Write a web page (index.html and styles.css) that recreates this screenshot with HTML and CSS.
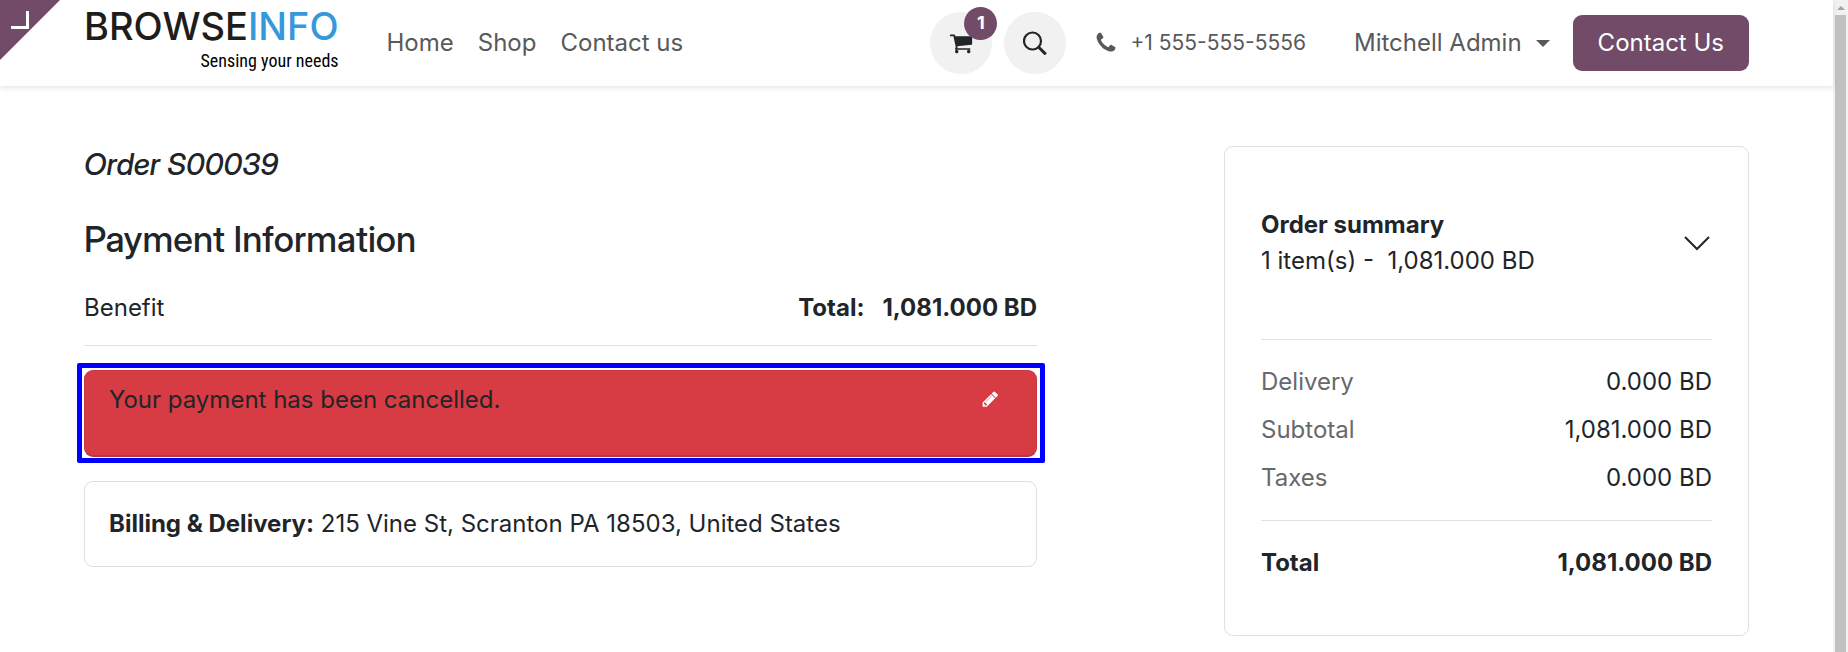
FILE: index.html
```html
<!DOCTYPE html>
<html lang="en">
<head>
    <meta charset="UTF-8">
    <meta name="viewport" content="width=device-width, initial-scale=1.0">
    <title>Order S00039 | Payment Information</title>
    <link rel="stylesheet" href="styles.css">
</head>
<body>
    <div class="page">
        <a href="#" class="corner-toggle" aria-label="Back to editor"></a>

        <header class="site-header">
            <a href="#" class="logo">
                <span class="logo-name">BROWSE<span class="logo-accent">INFO</span></span>
                <span class="logo-tagline">Sensing your needs</span>
            </a>
            <nav class="main-nav">
                <a href="#">Home</a>
                <a href="#">Shop</a>
                <a href="#">Contact us</a>
            </nav>
            <div class="header-tools">
                <a href="#" class="round-button" aria-label="Cart">
                    <svg width="24" height="24" viewBox="0 0 1792 1792" fill="currentColor"><path d="M704 1536q0 52-38 90t-90 38-90-38-38-90 38-90 90-38 90 38 38 90zm896 0q0 52-38 90t-90 38-90-38-38-90 38-90 90-38 90 38 38 90zm128-1088v512q0 24-16.5 42.5t-40.5 21.5l-1044 122q13 60 13 70 0 16-24 64h920q26 0 45 19t19 45-19 45-45 19h-1024q-26 0-45-19t-19-45q0-11 8-31.5t16-36 21.5-40 15.5-29.5l-177-823h-204q-26 0-45-19t-19-45 19-45 45-19h256q16 0 28.5 6.5t19.5 15.5 13 24.5 8 26 5.5 29.5 4.5 26h1201q26 0 45 19t19 45z"/></svg>
                    <span class="cart-badge">1</span>
                </a>
                <button type="button" class="round-button" aria-label="Search">
                    <svg width="24" height="24" viewBox="0 0 24 24" fill="none" stroke="currentColor"><circle cx="9.500" cy="10" r="8.500" stroke-width="2.200"/><path d="M15.500 16l7.300 7.300" stroke-width="3"/></svg>
                </button>
                <a href="#" class="phone">
                    <svg width="24" height="24" viewBox="0 0 1792 1792" fill="currentColor"><path d="M1600 1240q0 27-10 70.500t-21 68.500q-21 50-122 106-94 51-186 51-27 0-52.500-3.500t-57.500-12.500-47.500-14.500-55.500-20.500-49-18q-98-35-175-83-128-79-264.500-215.500t-215.500-264.500q-48-77-83-175-3-9-18-49t-20.500-55.500-14.500-47.500-12.500-57.500-3.500-52.500q0-92 51-186 56-101 106-122 25-11 68.500-21t70.500-10q14 0 21 3 18 6 53 76 11 19 30 54t35 63.500 31 53.500q3 4 17.500 25t21.500 35.500 7 28.500q0 20-28.500 50t-62 55-62 53-28.500 46q0 9 5 22.500t8.500 20.500 14 24 11.500 19q76 137 174 235t235 174q2 1 19 11.500t24 14 20.500 8.500 22.500 5q18 0 46-28.500t53-62 55-62 50-28.500q14 0 28.500 7t35.500 21.500 25 17.500q25 15 53.500 31t63.500 35 54 30q70 35 76 53 3 7 3 21z"/></svg>
                    <span>+1 555-555-5556</span>
                </a>
                <button type="button" class="user-menu">Mitchell Admin</button>
                <a href="#" class="contact-button">Contact Us</a>
            </div>
        </header>

        <main class="order-layout">
            <section class="payment">
                <h4 class="order-name">Order S00039</h4>
                <h3 class="payment-title">Payment Information</h3>
                <div class="payment-line">
                    <span>Benefit</span>
                    <strong class="payment-total"><span>Total:</span><span>1,081.000 BD</span></strong>
                </div>
                <div class="alert-cancelled" role="alert">
                    <span>Your payment has been cancelled.</span>
                    <a href="#" class="edit-link" aria-label="Edit message">
                        <svg width="18" height="18" viewBox="128 0 1664 1792" fill="currentColor"><path d="M491 1536l91-91-235-235-91 91v107h128v128h107zm523-928q0-22-22-22-10 0-17 7l-542 542q-7 7-7 17 0 22 22 22 10 0 17-7l542-542q7-7 7-17zm-54-192l416 416-832 832h-416v-416zm683 96q0 53-37 90l-166 166-416-416 166-165q36-38 90-38 53 0 91 38l235 234q37 39 37 91z"/></svg>
                    </a>
                </div>
                <div class="address-card">
                    <strong>Billing &amp; Delivery:</strong> 215 Vine St, Scranton PA 18503, United States
                </div>
            </section>

            <aside class="summary-card">
                <button type="button" class="summary-toggle">
                    <span class="summary-text">
                        <strong>Order summary</strong>
                        <span>1 item(s) - &nbsp;1,081.000 BD</span>
                    </span>
                    <svg width="30" height="24" viewBox="0 0 30 24" fill="none" stroke="currentColor" stroke-width="2"><path d="M3 6l12 12L27 6"/></svg>
                </button>
                <table class="summary-table">
                    <tbody>
                        <tr>
                            <th scope="row">Delivery</th>
                            <td>0.000 BD</td>
                        </tr>
                        <tr>
                            <th scope="row">Subtotal</th>
                            <td>1,081.000 BD</td>
                        </tr>
                        <tr>
                            <th scope="row">Taxes</th>
                            <td>0.000 BD</td>
                        </tr>
                    </tbody>
                    <tfoot>
                        <tr>
                            <th scope="row">Total</th>
                            <td>1,081.000 BD</td>
                        </tr>
                    </tfoot>
                </table>
            </aside>
        </main>
    </div>
    <div class="scrollbar" aria-hidden="true">
        <span class="scrollbar-arrow"></span>
        <span class="scrollbar-thumb"></span>
    </div>
</body>
</html>
```
FILE: styles.css
```css
* {
    box-sizing: border-box;
}

body {
    margin: 0;
    display: flex;
    min-height: 100vh;
    font-family: Inter, "Open Sans", sans-serif;
    font-size: 24px;
    line-height: 36px;
    color: #212529;
    background-color: #fff;
}

a {
    color: inherit;
    text-decoration: none;
}

button {
    padding: 0;
    border: none;
    background: none;
    font: inherit;
    color: inherit;
    cursor: pointer;
}

svg {
    display: block;
    flex: none;
}

strong {
    font-weight: 700;
}

.page {
    position: relative;
    flex: 1;
    min-width: 0;
}

/* Backend shortcut in the corner */
.corner-toggle {
    position: absolute;
    top: 0;
    left: 0;
    width: 60px;
    height: 60px;
    background-color: #714b67;
    clip-path: polygon(0 0, 100% 0, 0 100%);
}

.corner-toggle::after {
    content: "";
    position: absolute;
    top: 11px;
    left: 11px;
    width: 15px;
    height: 15px;
    border-right: 3px solid #fff;
    border-bottom: 3px solid #fff;
    border-radius: 1px;
}

/* Header */
.site-header {
    display: flex;
    align-items: center;
    height: 86px;
    padding: 0 84px;
    color: #58595a;
    box-shadow: 0 2px 5px rgba(0, 0, 0, 0.1);
}

.logo {
    display: flex;
    flex-direction: column;
    align-items: flex-end;
    margin-right: 48px;
    color: #1d1d1b;
}

.logo-name {
    font-size: 38px;
    font-weight: 500;
    line-height: 36px;
}

.logo-accent {
    color: #3498db;
}

.logo-tagline {
    font-family: "Roboto Condensed", "Liberation Sans Narrow", Roboto, sans-serif;
    font-size: 18px;
    line-height: 34px;
    color: #000;
}

.main-nav {
    display: flex;
    gap: 24px;
}

.header-tools {
    display: flex;
    align-items: center;
    margin-left: auto;
}

.round-button {
    position: relative;
    display: flex;
    align-items: center;
    justify-content: center;
    width: 62px;
    height: 62px;
    margin-right: 12px;
    border-radius: 50%;
    background-color: #f1f1f1;
    color: #212529;
}

.cart-badge {
    position: absolute;
    top: -5px;
    right: -5px;
    width: 33px;
    height: 33px;
    border-radius: 50%;
    background-color: #714b67;
    color: #fff;
    font-size: 18px;
    font-weight: 700;
    line-height: 32px;
    text-align: center;
}

.phone {
    display: flex;
    align-items: center;
    gap: 12px;
    margin: 0 48px 0 16px;
    font-size: 21px;
}

.user-menu {
    display: flex;
    align-items: center;
    gap: 14px;
    margin-right: 23px;
}

.user-menu::after {
    content: "";
    border-top: 7px solid;
    border-left: 7px solid transparent;
    border-right: 7px solid transparent;
}

.contact-button {
    padding: 10px 25px;
    border-radius: 9px;
    background-color: #714b67;
    color: #fff;
}

/* Order page */
.order-layout {
    display: grid;
    grid-template-columns: minmax(0, 953fr) minmax(0, 525fr);
    gap: 187px;
    align-items: start;
    padding: 60px 84px 12px;
}

.order-name,
.payment-title {
    font-family: "Inter Display", Inter, sans-serif;
    font-weight: 500;
    font-variation-settings: "opsz" 32;
}

.order-name {
    margin: 0 0 35px;
    font-size: 30px;
    font-style: italic;
    line-height: 36px;
}

.payment-title {
    margin: 0 0 29px;
    font-size: 36px;
    line-height: 44px;
}

.payment-line {
    display: flex;
    justify-content: space-between;
    margin-bottom: 24px;
    padding-bottom: 19px;
    border-bottom: 1px solid #dee2e6;
}

.payment-total {
    display: flex;
    gap: 18px;
}

.alert-cancelled {
    position: relative;
    display: flex;
    justify-content: space-between;
    margin-bottom: 24px;
    padding: 11px 36px 37px 24px;
    border: 1px solid #c93840;
    border-bottom: 2px solid #b93840;
    border-radius: 9px;
    background-color: #d73b43;
}

/* Highlight frame around the alert */
.alert-cancelled::after {
    content: "";
    position: absolute;
    inset: -8px -9px -8px -8px;
    border: 5px solid #00f;
    border-radius: 2px;
    pointer-events: none;
}

.edit-link {
    padding-top: 8px;
    color: #fff;
}

.address-card {
    padding: 24px;
    border: 1px solid #dee0e2;
    border-radius: 9px;
}

/* Order summary */
.summary-card {
    padding: 0 36px 30px;
    border: 1px solid #dee0e2;
    border-radius: 9px;
}

.summary-toggle {
    display: flex;
    align-items: center;
    justify-content: space-between;
    width: 100%;
    padding: 60px 0;
    text-align: left;
}

.summary-text {
    display: flex;
    flex-direction: column;
}

.summary-table {
    width: 100%;
    border-collapse: collapse;
}

.summary-table th {
    padding: 6px 0;
    font-weight: 400;
    text-align: left;
    color: #66696c;
}

.summary-table td {
    padding: 6px 0;
    text-align: right;
}

.summary-table tbody,
.summary-table tfoot {
    border-top: 1px solid #dee2e6;
}

.summary-table tr:first-child th,
.summary-table tr:first-child td {
    padding-top: 24px;
}

.summary-table tr:last-child th,
.summary-table tr:last-child td {
    padding-bottom: 24px;
}

.summary-table tfoot th,
.summary-table tfoot td {
    font-weight: 700;
    color: #212529;
}

/* Scrollbar */
.scrollbar {
    display: flex;
    flex-direction: column;
    align-items: center;
    gap: 5px;
    width: 15px;
    padding-top: 6px;
    background-color: #f1f1f1;
}

.scrollbar-arrow {
    border-bottom: 4px solid #a3a3a3;
    border-left: 4px solid transparent;
    border-right: 4px solid transparent;
}

.scrollbar-thumb {
    flex: 1;
    width: 11px;
    background-color: #c1c1c1;
}
```
